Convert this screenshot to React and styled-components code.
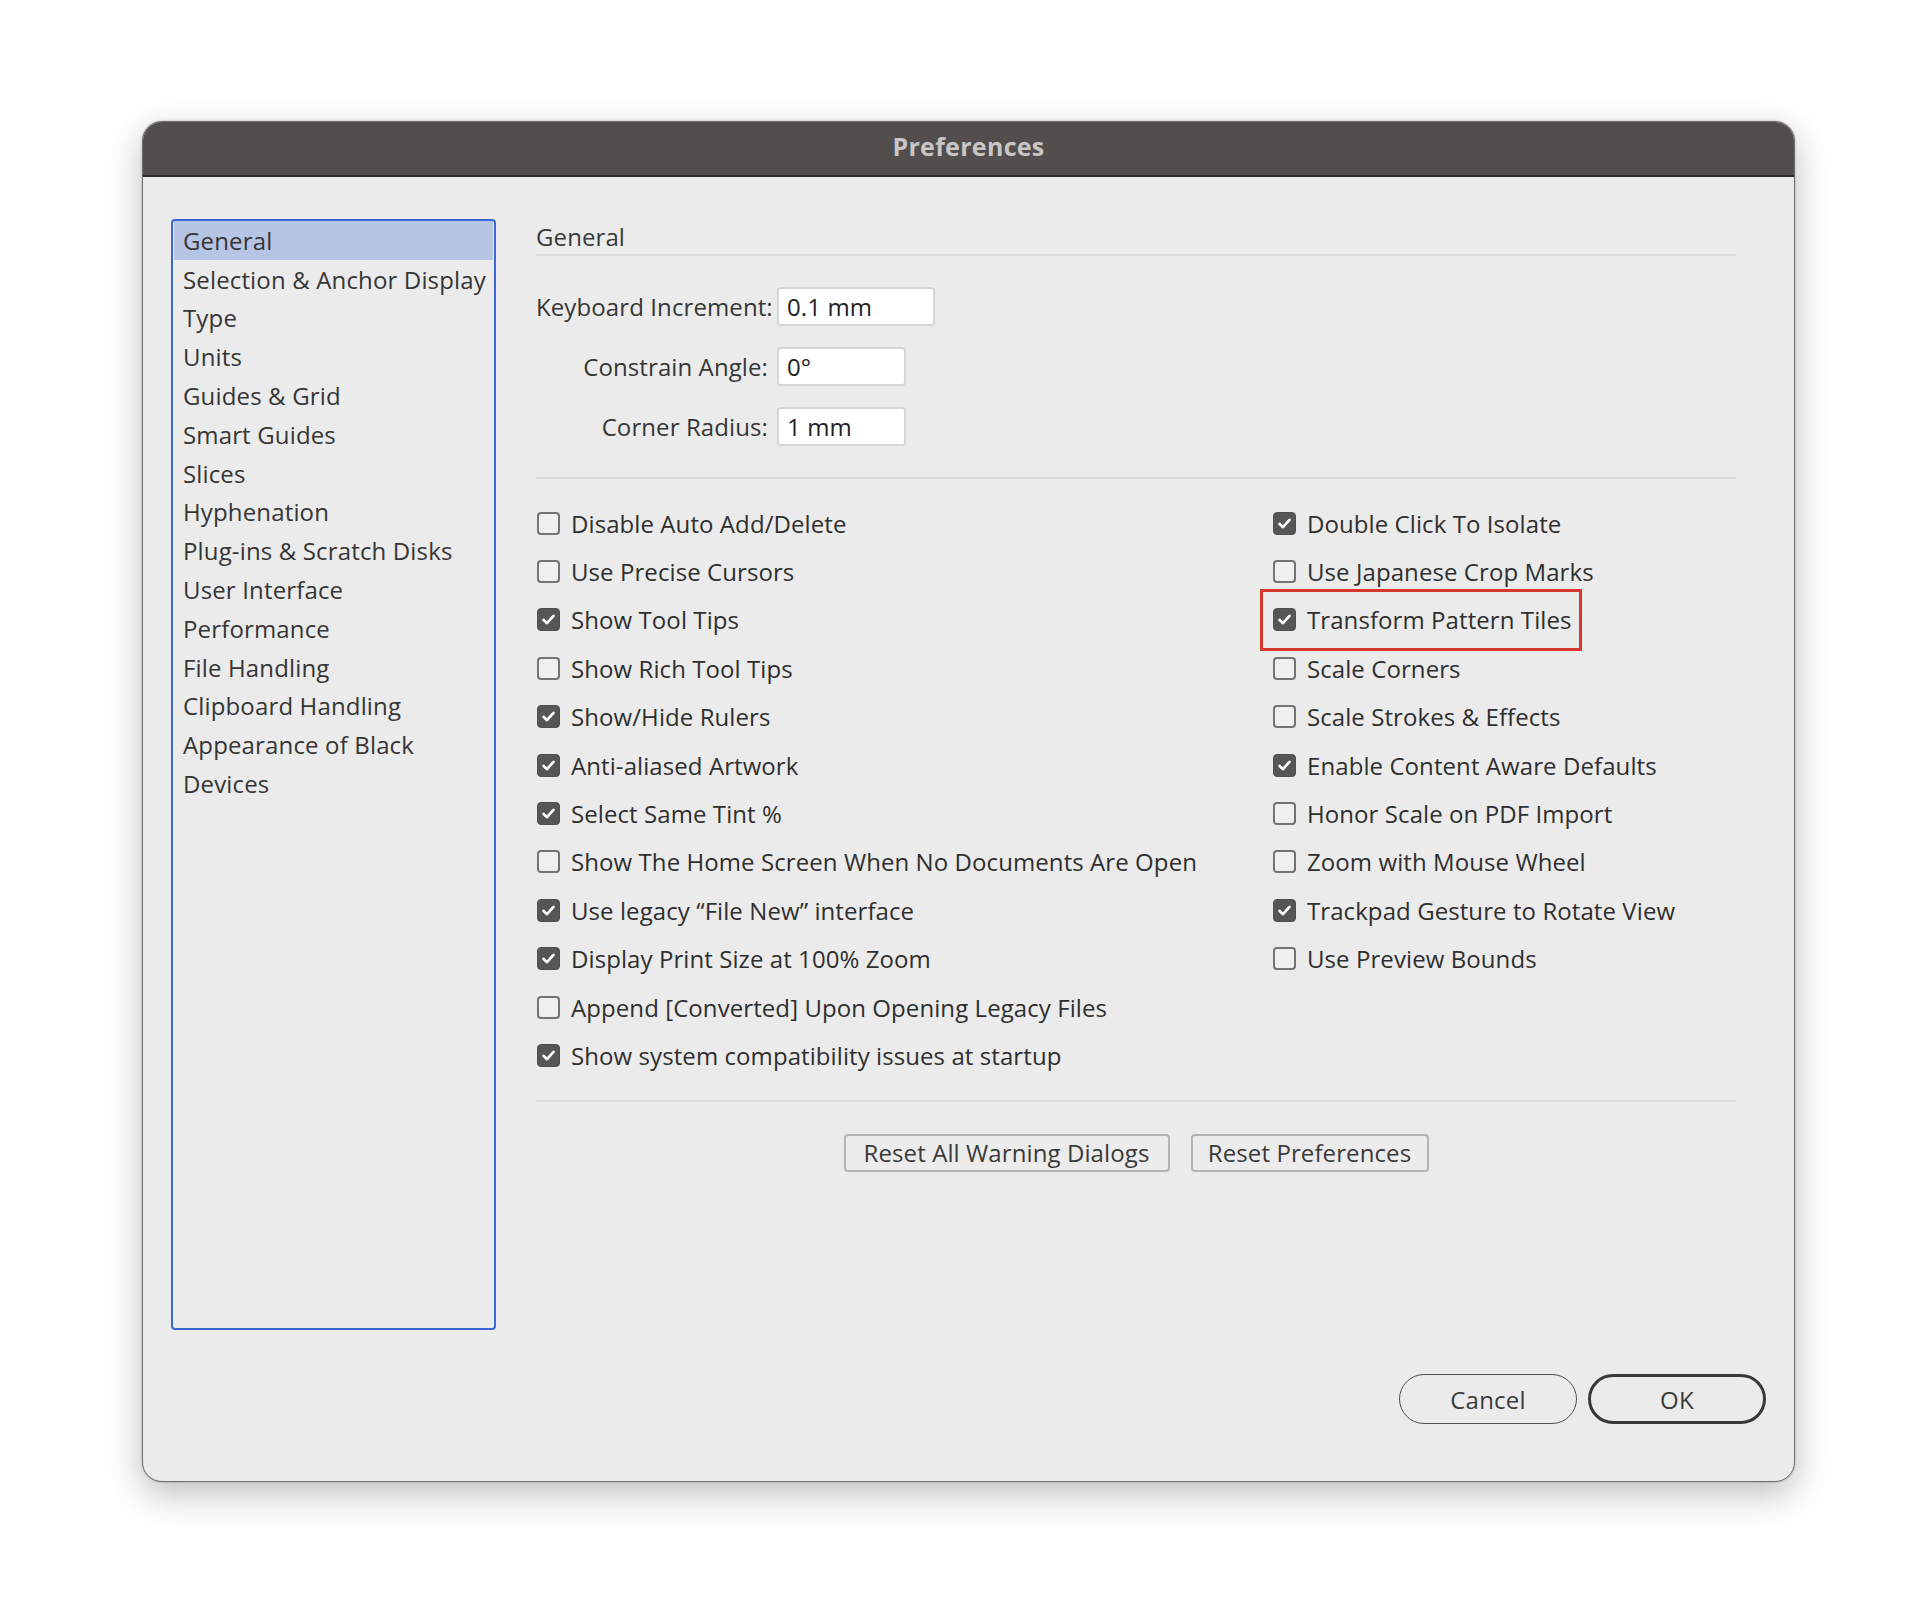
import React from 'react';
import styled, { createGlobalStyle } from 'styled-components';

const GlobalStyle = createGlobalStyle`
  body {
    margin: 0;
    background: #ffffff;
    font-family: "Open Sans", "Noto Sans", sans-serif;
  }
`;

const Page = styled.div`
  padding: 121px 0 0 142px;
  width: 1932px;
  height: 1602px;
  box-sizing: border-box;
`;

const Window = styled.div`
  width: 1653px;
  height: 1361px;
  box-sizing: border-box;
  display: flex;
  flex-direction: column;
  background: #ebebeb;
  border: 1px solid #6f6f6f;
  border-radius: 20px;
  overflow: hidden;
  box-shadow: 0 12px 36px rgba(0, 0, 0, 0.26), 0 0 2px rgba(0, 0, 0, 0.3);
`;

const TitleBar = styled.div`
  height: 55px;
  flex: none;
  box-sizing: border-box;
  padding-bottom: 6px;
  display: flex;
  align-items: center;
  justify-content: center;
  background: #524e4d;
  border-bottom: 2px solid #2b2929;
  color: #c9c6c5;
  font-size: 25px;
  font-weight: 700;
  letter-spacing: 0.3px;
`;

const Body = styled.div`
  display: flex;
  gap: 40px;
  padding: 42px 58px 0 28px;
  flex: none;
`;

const List = styled.div`
  width: 325px;
  height: 1111px;
  box-sizing: border-box;
  border: 2px solid #3b67d6;
  border-radius: 4px;
  padding: 0 1px;
`;

const ListItem = styled.div`
  height: 38.8px;
  display: flex;
  align-items: center;
  padding-left: 9px;
  font-size: 24px;
  letter-spacing: 0.15px;
  color: #363636;
  background: ${(p) => (p.$active ? '#b6c5e3' : 'transparent')};
`;

const Panel = styled.div`
  flex: 1;
  display: flex;
  flex-direction: column;
`;

const SectionHeader = styled.div`
  padding-top: 1px;
  padding-bottom: 1px;
  line-height: 33px;
  font-size: 24px;
  letter-spacing: 0.1px;
  color: #3a3a3a;
  border-bottom: 2px solid #dadada;
`;

const Fields = styled.div`
  display: flex;
  flex-direction: column;
  gap: 21px;
  margin-top: 31px;
`;

const FieldRow = styled.div`
  display: flex;
  align-items: center;
  gap: 9px;
`;

const FieldLabel = styled.div`
  width: 232px;
  text-align: right;
  font-size: 24px;
  letter-spacing: 0.1px;
  color: #363636;
  white-space: nowrap;
`;

const Input = styled.div`
  width: ${(p) => p.$width}px;
  height: 39px;
  box-sizing: border-box;
  background: #ffffff;
  border: 2px solid #d6d6d6;
  border-radius: 4px;
  padding-left: 8px;
  display: flex;
  align-items: center;
  font-size: 24px;
  letter-spacing: 0.1px;
  color: #222222;
`;

const Divider = styled.div`
  height: 2px;
  background: #dcdcdc;
  margin-top: ${(p) => p.$top}px;
`;

const Options = styled.div`
  display: grid;
  grid-template-columns: 736px 1fr;
  margin-top: 20px;
  padding-left: 1px;
`;

const Column = styled.div`
  display: flex;
  flex-direction: column;
`;

const OptionRow = styled.div`
  height: 48.4px;
  display: flex;
  align-items: center;
`;

const OptionInner = styled.div`
  position: relative;
  display: inline-flex;
  align-items: center;
  gap: 11px;
  font-size: 24px;
  letter-spacing: 0.08px;
  color: #2f2f2f;

  ${(p) =>
    p.$highlight &&
    `
    &::after {
      content: '';
      position: absolute;
      top: -14px;
      bottom: -15px;
      left: -13px;
      right: -10px;
      border: 3px solid #d8372c;
    }
  `}
`;

const Box = styled.span`
  width: 23px;
  height: 23px;
  flex: none;
  box-sizing: border-box;
  border-radius: 4px;
  display: flex;
  align-items: center;
  justify-content: center;
  background: ${(p) => (p.$checked ? '#565656' : '#efefef')};
  border: ${(p) => (p.$checked ? '1px solid #4e4e4e' : '2px solid #727272')};
`;

const ButtonRow = styled.div`
  display: flex;
  justify-content: center;
  gap: 21px;
  margin-top: 32px;
`;

const FlatButton = styled.div`
  height: 38px;
  width: ${(p) => p.$width}px;
  box-sizing: border-box;
  border: 2px solid #b4b4b4;
  border-radius: 4px;
  background: #ececec;
  display: flex;
  align-items: center;
  justify-content: center;
  font-size: 24px;
  letter-spacing: 0.1px;
  color: #3a3a3a;
`;

const Footer = styled.div`
  display: flex;
  justify-content: flex-end;
  gap: 11px;
  margin-top: 44px;
  padding-right: 28px;
`;

const PillButton = styled.div`
  width: 178px;
  height: 50px;
  box-sizing: border-box;
  border-radius: 25px;
  border: ${(p) => (p.$primary ? '3.5px solid #383838' : '1.5px solid #4f4f4f')};
  display: flex;
  align-items: center;
  justify-content: center;
  font-size: 24px;
  letter-spacing: 0.2px;
  color: #3b3b3b;
`;

const Check = () => (
  <svg width="15" height="15" viewBox="0 0 15 15">
    <path
      d="M2.5 7.8 L6 11.2 L12.5 3.8"
      fill="none"
      stroke="#ffffff"
      strokeWidth="2.6"
      strokeLinecap="round"
      strokeLinejoin="round"
    />
  </svg>
);

const categories = [
  'General',
  'Selection & Anchor Display',
  'Type',
  'Units',
  'Guides & Grid',
  'Smart Guides',
  'Slices',
  'Hyphenation',
  'Plug-ins & Scratch Disks',
  'User Interface',
  'Performance',
  'File Handling',
  'Clipboard Handling',
  'Appearance of Black',
  'Devices',
];

const leftOptions = [
  ['Disable Auto Add/Delete', false],
  ['Use Precise Cursors', false],
  ['Show Tool Tips', true],
  ['Show Rich Tool Tips', false],
  ['Show/Hide Rulers', true],
  ['Anti-aliased Artwork', true],
  ['Select Same Tint %', true],
  ['Show The Home Screen When No Documents Are Open', false],
  ['Use legacy \u201cFile New\u201d interface', true],
  ['Display Print Size at 100% Zoom', true],
  ['Append [Converted] Upon Opening Legacy Files', false],
  ['Show system compatibility issues at startup', true],
];

const rightOptions = [
  ['Double Click To Isolate', true],
  ['Use Japanese Crop Marks', false],
  ['Transform Pattern Tiles', true, true],
  ['Scale Corners', false],
  ['Scale Strokes & Effects', false],
  ['Enable Content Aware Defaults', true],
  ['Honor Scale on PDF Import', false],
  ['Zoom with Mouse Wheel', false],
  ['Trackpad Gesture to Rotate View', true],
  ['Use Preview Bounds', false],
];

const Option = ({ label, checked, highlight }) => (
  <OptionRow>
    <OptionInner $highlight={highlight}>
      <Box $checked={checked}>{checked && <Check />}</Box>
      <span>{label}</span>
    </OptionInner>
  </OptionRow>
);

export default function App() {
  return (
    <>
      <GlobalStyle />
      <Page>
        <Window>
          <TitleBar>Preferences</TitleBar>
          <Body>
            <List>
              {categories.map((c, i) => (
                <ListItem key={c} $active={i === 0}>
                  {c}
                </ListItem>
              ))}
            </List>
            <Panel>
              <SectionHeader>General</SectionHeader>
              <Fields>
                <FieldRow>
                  <FieldLabel>Keyboard Increment:</FieldLabel>
                  <Input $width={158}>0.1 mm</Input>
                </FieldRow>
                <FieldRow>
                  <FieldLabel>Constrain Angle:</FieldLabel>
                  <Input $width={129}>0°</Input>
                </FieldRow>
                <FieldRow>
                  <FieldLabel>Corner Radius:</FieldLabel>
                  <Input $width={129}>1 mm</Input>
                </FieldRow>
              </Fields>
              <Divider $top={31} />
              <Options>
                <Column>
                  {leftOptions.map(([l, c]) => (
                    <Option key={l} label={l} checked={c} />
                  ))}
                </Column>
                <Column>
                  {rightOptions.map(([l, c, h]) => (
                    <Option key={l} label={l} checked={c} highlight={h} />
                  ))}
                </Column>
              </Options>
              <Divider $top={20} />
              <ButtonRow>
                <FlatButton $width={326}>Reset All Warning Dialogs</FlatButton>
                <FlatButton $width={238}>Reset Preferences</FlatButton>
              </ButtonRow>
            </Panel>
          </Body>
          <Footer>
            <PillButton>Cancel</PillButton>
            <PillButton $primary>OK</PillButton>
          </Footer>
        </Window>
      </Page>
    </>
  );
}
